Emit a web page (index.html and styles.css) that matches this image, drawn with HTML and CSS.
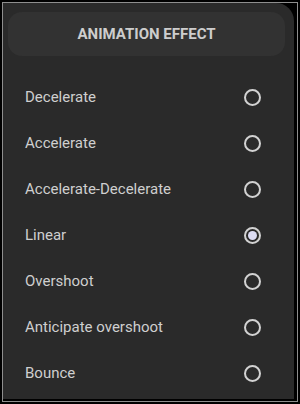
FILE: index.html
```html
<!DOCTYPE html>
<html lang="en">
<head>
    <meta charset="UTF-8">
    <meta name="viewport" content="width=device-width, initial-scale=1.0">
    <title>Animation effect</title>
    <link rel="stylesheet" href="styles.css">
</head>
<body>
    <div class="frame">
        <div class="panel">
            <div class="title">ANIMATION EFFECT</div>
            <ul class="options">
                <li class="option"><span>Decelerate</span><span class="radio"></span></li>
                <li class="option"><span>Accelerate</span><span class="radio"></span></li>
                <li class="option"><span>Accelerate-Decelerate</span><span class="radio"></span></li>
                <li class="option"><span>Linear</span><span class="radio checked"></span></li>
                <li class="option"><span>Overshoot</span><span class="radio"></span></li>
                <li class="option"><span>Anticipate overshoot</span><span class="radio"></span></li>
                <li class="option"><span>Bounce</span><span class="radio"></span></li>
            </ul>
        </div>
    </div>
</body>
</html>
```

FILE: styles.css
```css
* {
    margin: 0;
    padding: 0;
    box-sizing: border-box;
    font-family: Roboto, "Liberation Sans", sans-serif;
}
html, body {
    height: 100%;
}
body {
    background: #000;
    padding: 2px;
}
.frame {
    height: 100%;
    border: 1px solid #8e8e8e;
    padding: 0 3px 2px 0;
}
.panel {
    height: 100%;
    background: #2a2a2a;
    border-top-right-radius: 18px;
    padding-top: 9px;
}
.title {
    margin: 0 9px 0 5px;
    height: 44px;
    border-radius: 14px;
    background: #323232;
    color: #cdcdcd;
    font-size: 15px;
    font-weight: bold;
    display: flex;
    justify-content: center;
    align-items: center;
}
.options {
    list-style: none;
    margin-top: 18px;
    padding: 0 33px 0 22px;
}
.option {
    height: 46px;
    display: flex;
    justify-content: space-between;
    align-items: center;
    color: #cfcfcf;
    font-size: 15px;
}
.radio {
    width: 17px;
    height: 17px;
    border: 2px solid #d2d2d2;
    border-radius: 50%;
    display: flex;
    justify-content: center;
    align-items: center;
}
.radio.checked::after {
    content: "";
    width: 9px;
    height: 9px;
    border-radius: 50%;
    background: #dcdcf4;
}
```
